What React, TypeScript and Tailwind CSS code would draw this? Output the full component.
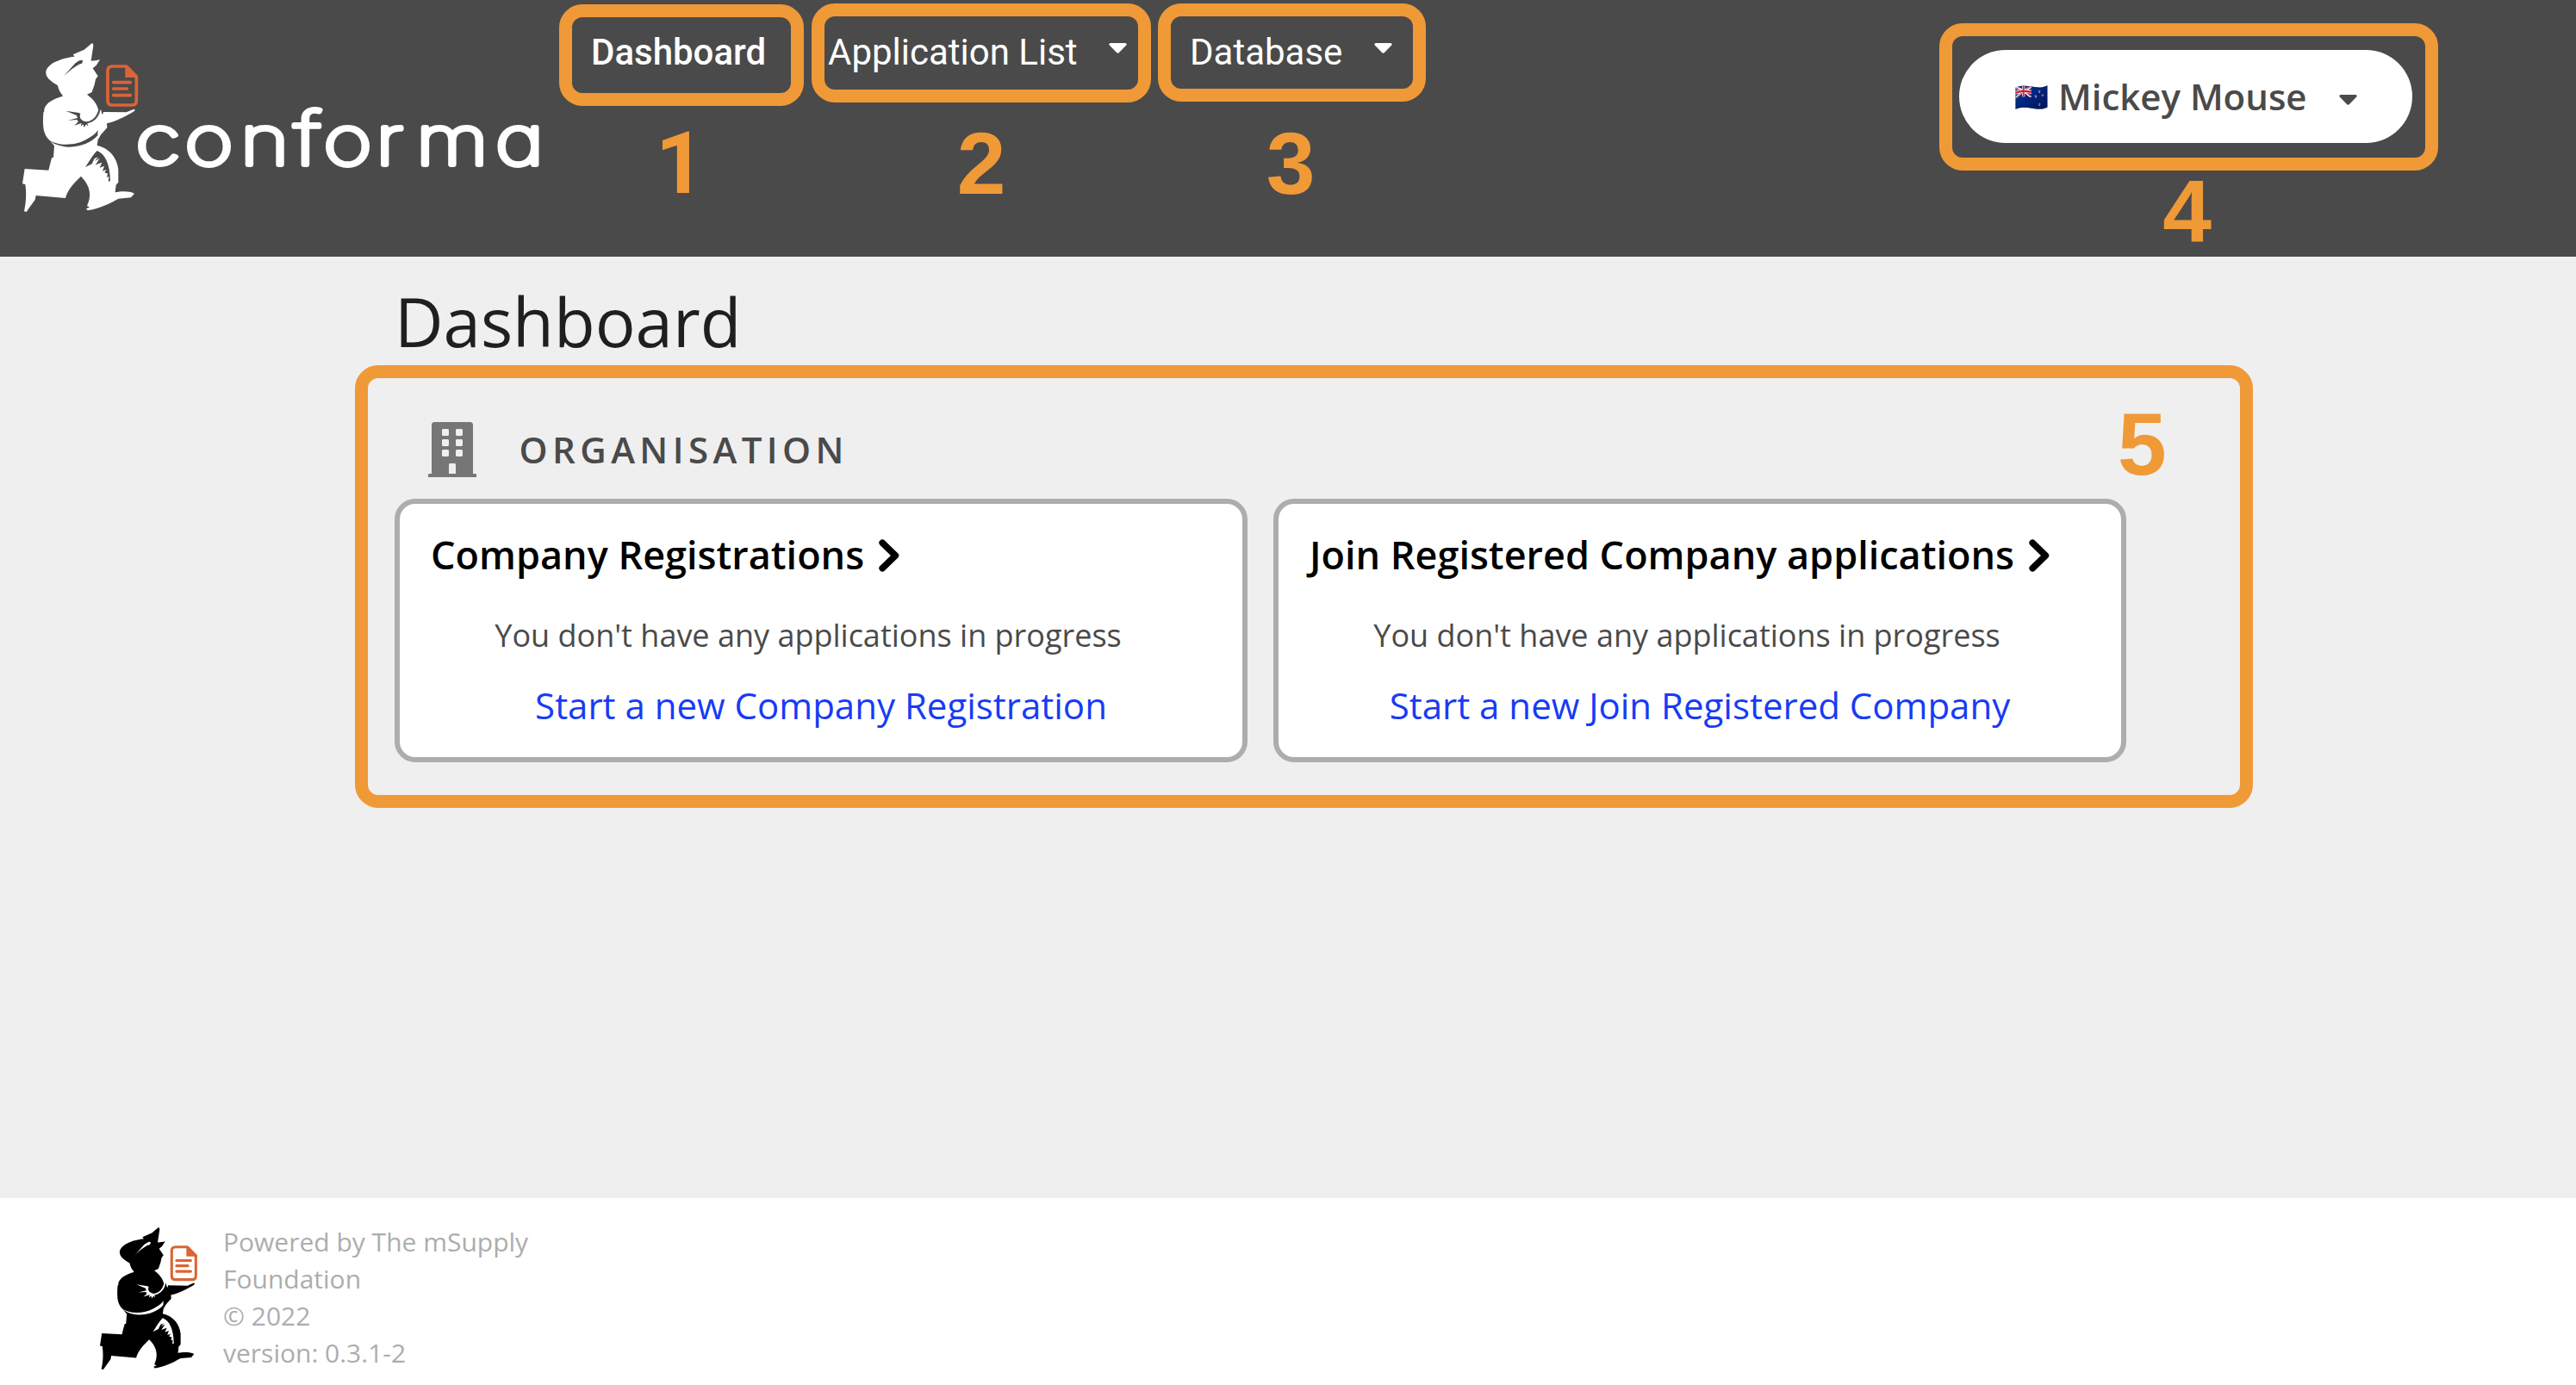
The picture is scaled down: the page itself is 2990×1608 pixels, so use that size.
import React from 'react';
import { FaBuilding } from 'react-icons/fa';

function RunnerFigure({ ink, paper }: { ink: string; paper: string }) {
  return (
    <g>
      <path
        fill={ink}
        d="M321,60 C325,62 326,68 324,76 L317,122 C328,122 338,120 348,118 L335,138 L323,148 L341,175 L333,186 L329,205 L320,231 L303,239 C324,254 338,272 343,293 L348,296 L351,290 L354,303 L357,310 L360,300 L440,301 L466,290 L471,294 L462,301 L432,317 C412,327 392,335 372,340 L373,355 L352,378 L341,397 L338,417 C380,425 408,460 412,500 L412,545 L404,554 L401,580 C420,576 450,574 468,584 L456,598 L412,602 C380,620 345,637 305,643 L300,637 L312,632 L303,627 C318,595 318,560 282,524 C260,545 235,570 228,600 L125,591 L122,606 C108,625 98,640 92,648 L84,646 C92,610 92,580 88,552 L78,550 L86,498 L169,503 L180,460 L186,458 L189,418 L170,396 C150,375 148,350 151,302 L154,298 C152,270 190,252 219,245 L216,240 C206,228 203,218 201,208 C175,192 158,180 160,160 C165,130 215,112 260,107 L254,100 L293,83 C303,76 312,66 321,60Z"
      />
      <g fill={paper}>
        <path d="M222,175 L261,131 C275,121 284,116 288,122 C288,130 283,133 275,134 C255,145 240,158 222,175Z" />
        <path d="M229,296 L275,303 L280,306 C275,318 280,330 300,334 C322,334 338,314 343,292 L349,294 C345,318 326,336 304,340 L307,350 L300,343 L293,354 L290,343 L281,350 L284,339 L258,347 L272,335 L269,327 L237,329 L270,321 L267,312Z" />
        <path d="M168,395 C200,420 262,418 300,396 C325,382 338,370 341,362 L340,382 C320,405 285,421 240,422 C210,420 184,412 168,395Z" />
        <path d="M338,435 C365,445 383,480 384,540 L378,543 L379,525 L371,527 L376,515 L364,511 L371,500 L357,506 L363,488 L347,494 L355,476 L341,481 L332,485 L347,461 L330,471 L342,457 L329,462 L320,481 L297,492 C310,475 318,455 338,435Z" />
      </g>
      <g stroke="#dc6435" fill="none" strokeWidth="11">
        <path d="M389,141 H440 L475,178 V260 Q475,276 459,276 H391 Q375,276 375,260 V157 Q375,141 391,141Z" strokeLinejoin="round" />
        <path d="M395,197 H454 M395,219 H442 M395,242 H454" strokeLinecap="round" />
      </g>
      <path d="M436,138 H444 L480,174 V180 H436Z" fill="#dc6435" />
    </g>
  );
}

function BrandLogo() {
  return (
    <svg className="h-[298px] w-[649px] shrink-0" viewBox="0 0 649 298">
      <g transform="translate(0 30) scale(0.33333)">
        <RunnerFigure ink="#ffffff" paper="#4a4a4a" />
      </g>
      <text
        transform="translate(156 191) scale(1.24 1)"
        x="1.3 47.1 99.1 149.7 177 226.1 263.7 338"
        className="fill-white font-['Inter'] text-[78px] font-thin [font-feature-settings:'cv11'] [stroke-linejoin:round] [stroke-width:5.8px] [stroke:white]"
      >
        con<tspan className="text-[85px]">f</tspan>orma
      </text>
    </svg>
  );
}

function Caret({ className }: { className: string }) {
  return (
    <svg className={`h-[12px] w-[21px] shrink-0 ${className}`} viewBox="0 0 21 12">
      <path fill="currentColor" d="M1.5,0 H19.5 Q21.5,1 20.2,2.6 L12,11 Q10.5,12.6 9,11 L0.8,2.6 Q-0.5,1 1.5,0Z" />
    </svg>
  );
}

function Chevron() {
  return (
    <svg className="mt-[1px] ml-[17px] h-[38px] w-[24px] shrink-0" viewBox="0 0 24 38">
      <path fill="none" stroke="black" strokeWidth="7.6" strokeLinecap="round" strokeLinejoin="round" d="M4.2,4.2 L19.4,19 L4.2,33.8" />
    </svg>
  );
}

const digit = "font-['Liberation_Sans'] text-[102px] leading-[100px] font-bold text-[#f09937]";

function Card({ title, action }: { title: string; action: string }) {
  return (
    <div className="h-[306px] w-[990px] rounded-[24px] border-[6px] border-[#adadad] bg-white px-[35px] pt-[29px]">
      <div className="ml-[1px] flex items-center">
        <h3 className="text-[45px] leading-[60px] font-semibold whitespace-nowrap text-black">{title}</h3>
        <Chevron />
      </div>
      <p className="mt-[39px] mr-[30px] text-center text-[36px] leading-[50px] text-[#4a4a4a]">
        You don't have any applications in progress
      </p>
      <a className="mt-[26px] block text-center text-[42px] leading-[60px] text-[#173bf5]">{action}</a>
    </div>
  );
}

export default function App() {
  return (
    <div className="flex h-[1608px] w-[2990px] flex-col overflow-hidden bg-[#efefef] font-['Open_Sans',sans-serif]">
      <header className="flex h-[298px] shrink-0 items-start bg-[#4a4a4a] text-white">
        <BrandLogo />
        <nav className="flex items-start font-['Roboto'] text-[42px] leading-[48px]">
          <div className="mt-[5px] flex w-[284px] flex-col items-center">
            <div className="h-[118px] w-full rounded-[27px] border-[15px] border-[#f09937] pt-[17px] pl-[22px] font-medium">
              Dashboard
            </div>
            <span className="mt-[17px] mr-[3px] font-['Roboto'] text-[100px] leading-[100px] font-bold text-[#f09937]">1</span>
          </div>
          <div className="mt-[4px] ml-[9px] flex w-[394px] flex-col items-center">
            <div className="flex h-[115px] w-full items-start rounded-[27px] border-[15px] border-[#f09937] pt-[18px] pl-[4px]">
              <span className="w-[326px] shrink-0 whitespace-nowrap">Application List</span>
              <Caret className="mt-[13px]" />
            </div>
            <span className={`mt-[21px] ${digit}`}>2</span>
          </div>
          <div className="mt-[4px] ml-[8px] flex w-[311px] flex-col items-center">
            <div className="flex h-[114px] w-full items-start rounded-[27px] border-[15px] border-[#f09937] pt-[18px] pl-[22px]">
              <span className="w-[214px] shrink-0">Database</span>
              <Caret className="mt-[13px]" />
            </div>
            <span className={`mt-[22px] mr-[3px] ${digit}`}>3</span>
          </div>
        </nav>
        <div className="mt-[27px] mr-[160px] ml-auto flex w-[579px] flex-col items-center">
          <div className="h-[171px] w-full rounded-[27px] border-[15px] border-[#f09937] pt-[16px] pl-[8px]">
            <div className="flex h-[108px] w-[526px] items-center rounded-full bg-white pl-[64px] text-[#4a4a4a]">
              <span className="w-[51px] shrink-0 text-[32px] leading-[40px]">🇳🇿</span>
              <span className="w-[326px] shrink-0 text-[42px] leading-[60px] font-semibold">Mickey Mouse</span>
              <Caret className="mt-[8px]" />
            </div>
          </div>
          <span className={`-mt-[3px] mr-[4px] ${digit}`}>4</span>
        </div>
      </header>

      <main className="flex-1 pt-[25px]">
        <h1 className="ml-[458px] text-[78px] leading-[100px] text-[#1f1f1f]">Dashboard</h1>
        <section className="relative mt-[1px] ml-[412px] h-[514px] w-[2203px] rounded-[27px] border-[15px] border-[#f09937] pt-[51px] pl-[31px]">
          <div className="ml-[38.5px] flex h-[64px] items-center">
            <FaBuilding className="h-[64px] w-[56px] text-[#767676]" />
            <h2 className="ml-[50px] text-[42px] leading-[64px] font-semibold tracking-[5.43px] text-[#4a4a4a]">ORGANISATION</h2>
          </div>
          <span className={`absolute top-[27px] left-[2031px] ${digit}`}>5</span>
          <div className="mt-[25px] flex gap-[30px]">
            <Card title="Company Registrations" action="Start a new Company Registration" />
            <Card title="Join Registered Company applications" action="Start a new Join Registered Company" />
          </div>
        </section>
      </main>

      <footer className="flex h-[217px] shrink-0 items-start bg-white">
        <svg className="mt-[34px] ml-[116px] h-[165px] w-[113px]" viewBox="78 60 403 588">
          <RunnerFigure ink="#000000" paper="#ffffff" />
        </svg>
        <div className="mt-[29px] ml-[30px] text-[30px] leading-[43px] text-[#adadad]">
          <p>Powered by The mSupply</p>
          <p>Foundation</p>
          <p>© 2022</p>
          <p>version: 0.3.1-2</p>
        </div>
      </footer>
    </div>
  );
}
